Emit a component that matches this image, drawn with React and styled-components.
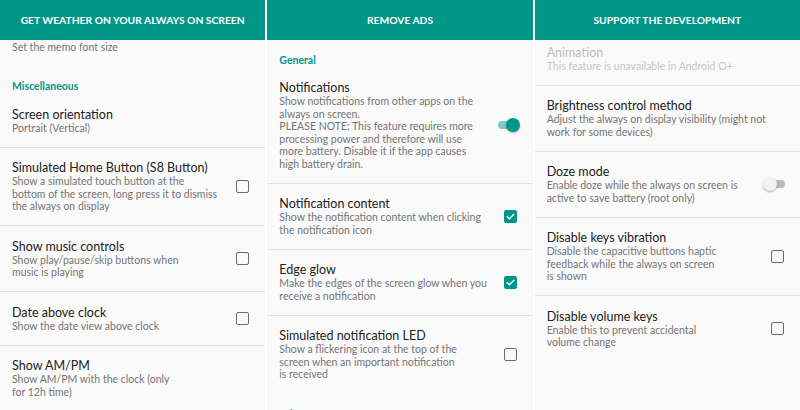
import React from "react";
import styled, { createGlobalStyle } from "styled-components";

const GlobalStyle = createGlobalStyle`
  html, body {
    margin: 0;
    padding: 0;
    background: #ffffff;
  }
  body {
    font-family: "Lato", "Open Sans", sans-serif;
    -webkit-font-smoothing: antialiased;
  }
`;

const panels = [
  {
    header: "Get weather on your always on screen",
    offset: 26.75,
    rows: [
      { title: "Memo font size", summary: "Set the memo font size", divider: false },
      { category: "Miscellaneous" },
      { title: "Screen orientation", summary: "Portrait (Vertical)" },
      {
        title: "Simulated Home Button (S8 Button)",
        summary:
          "Show a simulated touch button at the\nbottom of the screen, long press it to dismiss\nthe always on display",
        widget: "checkbox",
      },
      {
        title: "Show music controls",
        summary: "Show play/pause/skip buttons when\nmusic is playing",
        widget: "checkbox",
      },
      {
        title: "Date above clock",
        summary: "Show the date view above clock",
        widget: "checkbox",
      },
      {
        title: "Show AM/PM",
        summary: "Show AM/PM with the clock (only\nfor 12h time)",
      },
    ],
  },
  {
    header: "Remove ads",
    offset: 0.5,
    rows: [
      { category: "General" },
      {
        title: "Notifications",
        summary:
          "Show notifications from other apps on the\nalways on screen.\nPLEASE NOTE: This feature requires more\nprocessing power and therefore will use\nmore battery. Disable it if the app causes\nhigh battery drain.",
        widget: "switchOn",
      },
      {
        title: "Notification content",
        summary: "Show the notification content when clicking\nthe notification icon",
        widget: "checked",
      },
      {
        title: "Edge glow",
        summary: "Make the edges of the screen glow when you\nreceive a notification",
        widget: "checked",
      },
      {
        title: "Simulated notification LED",
        summary:
          "Show a flickering icon at the top of the\nscreen when an important notification\nis received",
        widget: "checkbox",
        divider: false,
      },
      { category: "Privacy" },
    ],
  },
  {
    header: "Support the development",
    offset: 8,
    rows: [
      {
        title: "Animation",
        summary: "This feature is unavailable in Android O+",
        disabled: true,
      },
      {
        title: "Brightness control method",
        summary: "Adjust the always on display visibility (might not\nwork for some devices)",
      },
      {
        title: "Doze mode",
        summary: "Enable doze while the always on screen is\nactive to save battery (root only)",
        widget: "switchOff",
      },
      {
        title: "Disable keys vibration",
        summary:
          "Disable the capacitive buttons haptic\nfeedback while the always on screen\nis shown",
        widget: "checkbox",
      },
      {
        title: "Disable volume keys",
        summary: "Enable this to prevent accidental\nvolume change",
        widget: "checkbox",
        divider: false,
      },
    ],
  },
];

function Widget({ type }) {
  if (type === "checkbox") return <CheckBox />;
  if (type === "checked")
    return (
      <CheckBox checked>
        <svg width="11" height="11" viewBox="0 0 24 24">
          <path
            d="M5 12.5l4.5 4.5L19 7.5"
            fill="none"
            stroke="#ffffff"
            strokeWidth="3"
            strokeLinecap="square"
          />
        </svg>
      </CheckBox>
    );
  if (type === "switchOn")
    return (
      <Switch>
        <Track on />
        <Thumb on />
      </Switch>
    );
  if (type === "switchOff")
    return (
      <Switch>
        <Track />
        <Thumb />
      </Switch>
    );
  return null;
}

function Panel({ header, offset, rows }) {
  return (
    <PanelWrap>
      <Header>{header}</Header>
      <Body>
        <List offset={offset}>
          {rows.map((row, i) =>
            row.category ? (
              <Category key={i}>{row.category}</Category>
            ) : (
              <Row key={i} divider={row.divider !== false}>
                <Texts>
                  <Title disabled={row.disabled}>{row.title}</Title>
                  <Summary disabled={row.disabled}>{row.summary}</Summary>
                </Texts>
                {row.widget && (
                  <WidgetSlot>
                    <Widget type={row.widget} />
                  </WidgetSlot>
                )}
              </Row>
            )
          )}
        </List>
      </Body>
    </PanelWrap>
  );
}

export default function App() {
  return (
    <>
      <GlobalStyle />
      <Screen>
        {panels.map((p, i) => (
          <Panel key={i} {...p} />
        ))}
      </Screen>
    </>
  );
}

const Screen = styled.div`
  display: flex;
  gap: 2px;
  width: 800px;
  height: 410px;
  overflow: hidden;
  background: #ffffff;
`;

const PanelWrap = styled.div`
  flex: 1;
  display: flex;
  flex-direction: column;
  background: #fafafa;
  min-width: 0;
`;

const Header = styled.div`
  height: 40px;
  flex-shrink: 0;
  background: #009688;
  color: #ffffff;
  display: flex;
  align-items: center;
  justify-content: center;
  font-size: 10.3px;
  font-weight: 700;
  text-transform: uppercase;
  position: relative;
  z-index: 2;
`;

const Body = styled.div`
  flex: 1;
  overflow: hidden;
`;

const List = styled.div`
  margin-top: ${({ offset }) => -offset}px;
`;

const Category = styled.div`
  padding: 13.25px 12px 1px;
  height: 14px;
  line-height: 14px;
  color: #009688;
  font-size: 10.5px;
  font-weight: 700;
`;

const Row = styled.div`
  display: flex;
  align-items: center;
  padding: 12.5px 16px 12.5px 12px;
  border-bottom: ${({ divider }) => (divider ? "1px solid #e4e4e4" : "none")};
`;

const Texts = styled.div`
  flex: 1;
  min-width: 0;
`;

const Title = styled.div`
  font-size: 12.5px;
  line-height: 15px;
  color: ${({ disabled }) => (disabled ? "#bdbdbd" : "#212121")};
  white-space: nowrap;
`;

const Summary = styled.div`
  font-size: 10.5px;
  line-height: 12.5px;
  color: ${({ disabled }) => (disabled ? "#c6c6c6" : "#757575")};
  white-space: pre;
`;

const WidgetSlot = styled.div`
  flex-shrink: 0;
  display: flex;
  justify-content: flex-end;
  align-items: center;
  width: 30px;
`;

const CheckBox = styled.div`
  width: 13px;
  height: 13px;
  box-sizing: border-box;
  border-radius: 2px;
  border: ${({ checked }) => (checked ? "none" : "1.6px solid #6b6b6b")};
  background: ${({ checked }) => (checked ? "#009688" : "transparent")};
  display: flex;
  align-items: center;
  justify-content: center;
`;

const Switch = styled.div`
  position: relative;
  width: 24px;
  height: 14px;
  margin-right: -3px;
`;

const Track = styled.div`
  position: absolute;
  left: 2px;
  right: 2px;
  top: 3px;
  height: 8px;
  border-radius: 4px;
  background: ${({ on }) => (on ? "#7fcac3" : "#b9b9b9")};
`;

const Thumb = styled.div`
  position: absolute;
  top: 0;
  ${({ on }) => (on ? "right: 0;" : "left: 0;")}
  width: 14px;
  height: 14px;
  border-radius: 50%;
  background: ${({ on }) => (on ? "#009688" : "#f1f1f1")};
  box-shadow: 0 1px 2px rgba(0, 0, 0, 0.3);
`;
